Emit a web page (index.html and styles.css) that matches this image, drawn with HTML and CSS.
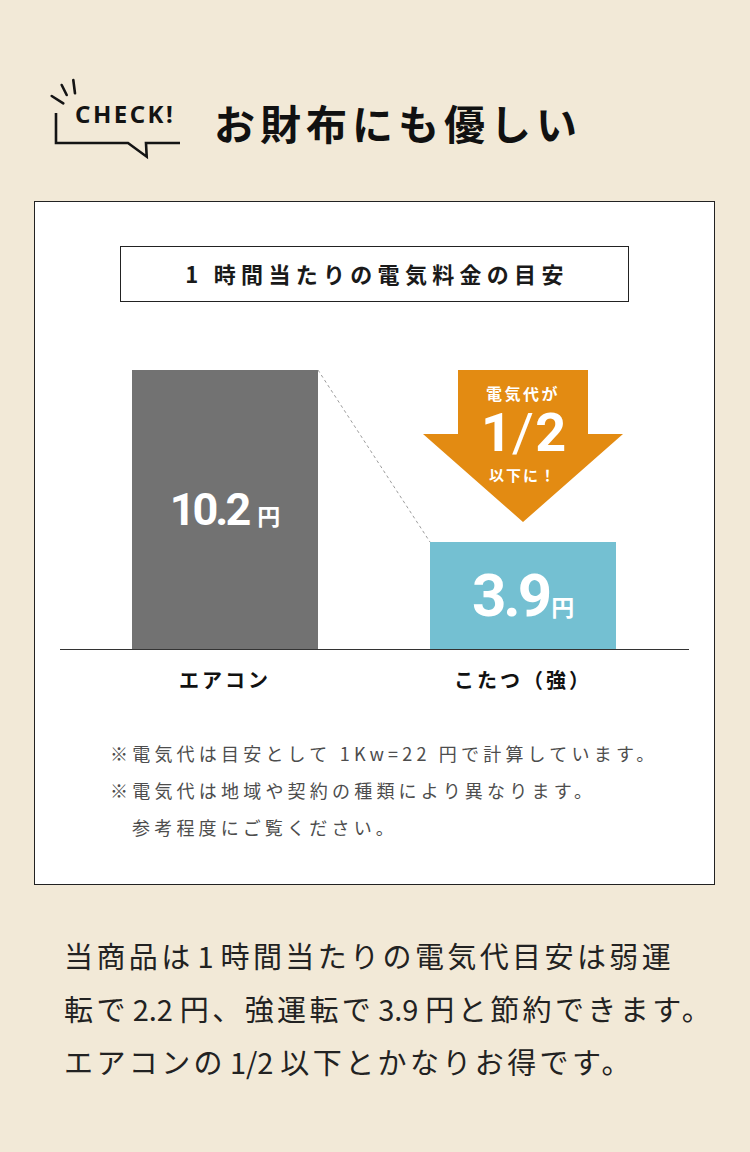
FILE: index.html
```html
<!DOCTYPE html>
<html lang="ja">
<head>
<meta charset="utf-8">
<title>お財布にも優しい</title>
<link rel="stylesheet" href="styles.css">
</head>
<body>
<header class="head">
  <div class="badge">
    <svg class="badge-lines" width="136" height="84" viewBox="0 0 136 84" aria-hidden="true">
      <g fill="none" stroke="#141414" stroke-width="2.6">
        <line x1="3.7" y1="20" x2="15.3" y2="27.3" stroke-linecap="round"/>
        <line x1="13.7" y1="9" x2="18.7" y2="19" stroke-linecap="round"/>
        <line x1="25.3" y1="4" x2="27" y2="17.3" stroke-linecap="round"/>
        <path d="M8 37V67H80L98.7 80.7L98 67H132"/>
      </g>
    </svg>
    <span class="badge-text">CHECK!</span>
  </div>
  <h1 class="title">お財布にも優しい</h1>
</header>

<section class="card">
  <h2 class="card-title">1 時間当たりの電気料金の目安</h2>

  <div class="chart">
    <div class="bars">
      <div class="bar bar-ac">
        <span class="val"><span class="num num-lg">10.2</span><span class="yen yen-ac">円</span></span>
      </div>
      <div class="bar bar-kt">
        <span class="val"><span class="num num-xl">3.9</span><span class="yen yen-kt">円</span></span>
      </div>
    </div>
    <svg class="guide" width="629" height="279" viewBox="0 0 629 279" aria-hidden="true">
      <line x1="258" y1="0" x2="370" y2="172" stroke="#9c9c9c" stroke-width="1" stroke-dasharray="3 3"/>
    </svg>
    <div class="arrow">
      <svg class="arrow-shape" width="200" height="152" viewBox="0 0 200 152" aria-hidden="true">
        <polygon points="35,0 165,0 165,64 200,64 100,152 0,64 35,64" fill="#e38b12"/>
      </svg>
      <div class="arrow-text">
        <span class="a1">電気代が</span>
        <span class="a2">1<span class="slash">/</span>2</span>
        <span class="a3">以下に！</span>
      </div>
    </div>
  </div>

  <div class="labels">
    <div class="label">エアコン</div>
    <div class="label">こたつ（強）</div>
  </div>

  <div class="notes">
    <p class="note">※電気代は目安として 1Kw=22 円で計算しています。</p>
    <p class="note">※電気代は地域や契約の種類により異なります。<br>参考程度にご覧ください。</p>
  </div>
</section>

<p class="summary">当商品は <span class="sn">1</span> 時間当たりの電気代目安は弱運<br>転で <span class="sn">2.2</span> 円、強運転で <span class="sn">3.9</span> 円と節約できます。<br>エアコンの <span class="sn">1/2</span> 以下とかなりお得です。</p>
</body>
</html>
```

FILE: styles.css
```css
html, body {
  margin: 0;
  padding: 0;
}

body {
  width: 750px;
  min-height: 1152px;
  background: #f2e9d7;
  font-family: "Noto Sans CJK JP", "Noto Sans", sans-serif;
  color: #1a1a1a;
  overflow-x: hidden;
}

/* ---------- header ---------- */
.head {
  display: flex;
  align-items: flex-start;
  padding: 76px 0 0 48px;
}

.badge {
  position: relative;
  width: 136px;
  height: 84px;
  box-sizing: border-box;
  padding: 26px 0 0 27px;
  flex: none;
}

.badge-lines {
  position: absolute;
  left: 0;
  top: 0;
}

.badge-text {
  position: relative;
  display: block;
  font-family: "Noto Sans", sans-serif;
  font-weight: 700;
  font-size: 24px;
  line-height: 24px;
  letter-spacing: 2.5px;
  color: #141414;
}

.title {
  margin: 21px 0 0 30px;
  font-size: 41px;
  line-height: 50px;
  font-weight: 700;
  letter-spacing: 5px;
  color: #111;
}

/* ---------- card ---------- */
.card {
  margin: 41px 0 0 34px;
  width: 681px;
  box-sizing: border-box;
  border: 1px solid #222;
  background: #fff;
  padding: 44px 0 38px;
}

.card-title {
  margin: 0 auto;
  width: 509px;
  height: 56px;
  box-sizing: border-box;
  border: 1px solid #222;
  font-size: 22px;
  font-weight: 700;
  line-height: 53px;
  text-align: center;
  letter-spacing: 5.3px;
  padding-left: 5px;
  color: #1a1a1a;
}

.chart {
  position: relative;
  margin: 68px 25px 0;
}

.bars {
  display: flex;
  align-items: flex-end;
  gap: 112px;
  padding-left: 72px;
  height: 279px;
  border-bottom: 1px solid #333;
}

.bar {
  width: 186px;
  display: flex;
  align-items: center;
  justify-content: center;
  color: #fff;
}

.bar-ac {
  height: 279px;
  background: #727272;
}

.bar-kt {
  height: 107px;
  background: #74c0d2;
}

.val {
  display: flex;
  align-items: baseline;
}

.num {
  font-family: Roboto, "Noto Sans", sans-serif;
  font-weight: 700;
}

.num-lg {
  font-size: 45px;
  line-height: 45px;
  letter-spacing: -3px;
}

.num-xl {
  font-size: 60px;
  line-height: 60px;
  letter-spacing: -3px;
}

.yen {
  font-size: 23px;
  line-height: 23px;
  font-weight: 700;
}

.yen-ac { margin-left: 9px; }
.yen-kt { margin-left: 2px; }

.guide {
  position: absolute;
  left: 0;
  top: 0;
  pointer-events: none;
}

.arrow {
  position: absolute;
  left: 363px;
  top: 0;
  width: 200px;
  height: 152px;
}

.arrow-shape {
  position: absolute;
  left: 0;
  top: 0;
}

.arrow-text {
  position: relative;
  display: flex;
  flex-direction: column;
  align-items: center;
  padding-top: 13px;
  color: #fff;
  font-weight: 700;
}

.a1 {
  font-size: 16px;
  line-height: 20px;
  letter-spacing: 2.5px;
}

.a2 {
  margin-top: 3px;
  font-family: Roboto, "Noto Sans", sans-serif;
  font-size: 54px;
  line-height: 54px;
  font-weight: 700;
  letter-spacing: -1px;
}

.slash {
  font-weight: 400;
  margin: 0 2px 0 1px;
}

.a3 {
  margin-top: 5px;
  font-size: 15px;
  line-height: 20px;
  letter-spacing: 2px;
}

.labels {
  display: flex;
  gap: 112px;
  padding-left: 72px;
  margin: 15px 25px 0;
}

.label {
  width: 186px;
  text-align: center;
  font-size: 20px;
  font-weight: 700;
  line-height: 30px;
  letter-spacing: 3px;
  color: #111;
}

.notes {
  margin: 40px 0 0 75px;
  font-size: 18px;
  line-height: 37px;
  letter-spacing: 4.2px;
  color: #4d4d4d;
}

.note {
  margin: 0;
  padding-left: 22px;
  text-indent: -22px;
}

/* ---------- summary ---------- */
.summary {
  margin: 44px 0 0 64px;
  font-size: 29px;
  line-height: 53px;
  letter-spacing: 3.4px;
  word-spacing: -6px;
  color: #222;
  white-space: nowrap;
}

.sn {
  letter-spacing: 0;
  margin-right: 3px;
}
```
